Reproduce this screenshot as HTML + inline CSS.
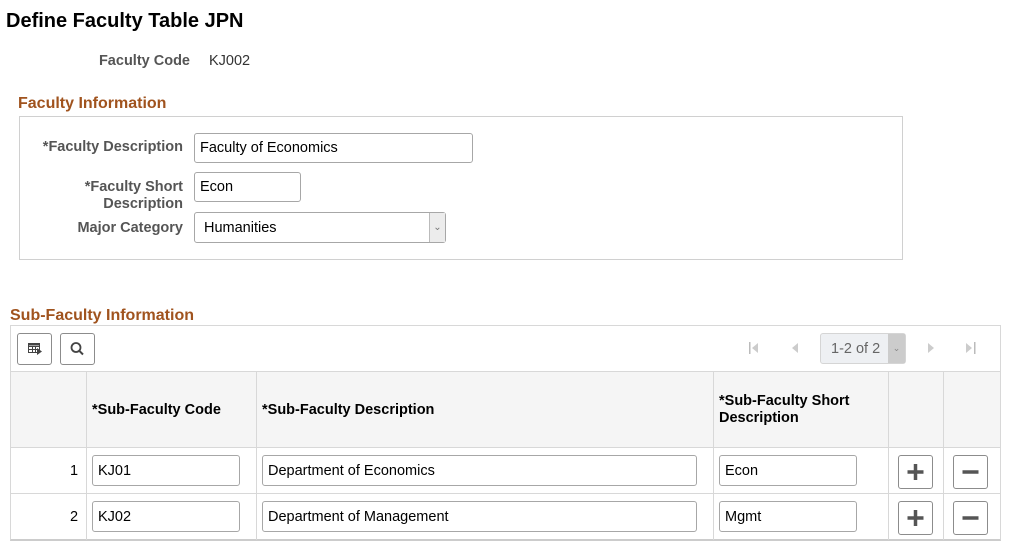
<!DOCTYPE html>
<html><head><meta charset="utf-8"><style>
*{box-sizing:border-box}
body{margin:0;width:1010px;height:553px;background:#fff;font-family:"Liberation Sans",Arial,sans-serif;position:relative;overflow:hidden;color:#000}
.a{position:absolute}
.lbl{position:absolute;font-size:14.5px;font-weight:bold;color:#555;text-align:right}
.inp{position:absolute;border:1px solid #a7a7a7;border-radius:3px;background:#fff;font-size:14.5px;color:#000;padding-left:5px;display:flex;align-items:center}
.sec{position:absolute;font-size:16px;font-weight:bold;color:#a0531e}
.vl{position:absolute;width:1px;background:#d8d8d8}
.hl{position:absolute;height:1px;background:#d8d8d8}
.th{position:absolute;font-size:14.5px;font-weight:bold;color:#000;line-height:17px}
.btn{position:absolute;width:35px;height:34px;border:1px solid #8c8c8c;border-radius:3px;background:#fff}
</style></head><body>
<div class="a" style="left:6px;top:10px;font-size:20px;font-weight:bold">Define Faculty Table JPN</div>
<div class="lbl" style="left:50px;width:140px;top:53px">Faculty Code</div>
<div class="a" style="left:209px;top:53px;font-size:14.5px;color:#333">KJ002</div>

<div class="sec" style="left:18px;top:95px">Faculty Information</div>
<div class="a" style="left:19px;top:116px;width:884px;height:144px;border:1px solid #d0d0d0"></div>
<div class="lbl" style="left:20px;width:163px;top:139px">*Faculty Description</div>
<div class="inp" style="left:194px;top:133px;width:279px;height:30px">Faculty of Economics</div>
<div class="lbl" style="left:20px;width:163px;top:179px;line-height:17px">*Faculty Short<br>Description</div>
<div class="inp" style="left:194px;top:172px;width:107px;height:30px">Econ</div>
<div class="lbl" style="left:20px;width:163px;top:220px">Major Category</div>
<div class="inp" style="left:194px;top:212px;width:252px;height:31px;padding-left:9px">Humanities
<div class="a" style="right:0;top:0;width:16px;height:29px;border-left:1px solid #bbb;background:#ececec;color:#777;font-size:10px;text-align:center;line-height:29px">&#8964;</div></div>

<div class="sec" style="left:10px;top:307px">Sub-Faculty Information</div>
<div class="a" style="left:10px;top:325px;width:991px;height:216px;border:1px solid #d8d8d8;border-bottom:2px solid #ccc"></div>
<div class="btn" style="left:17px;top:333px;width:35px;height:32px">
<svg width="33" height="30" viewBox="0 0 33 30"><g fill="none" stroke="#444" stroke-width="1"><rect x="10.5" y="9.5" width="11" height="9"/><line x1="10" y1="12.5" x2="22" y2="12.5"/><line x1="10" y1="15.5" x2="19" y2="15.5"/><line x1="14.5" y1="12" x2="14.5" y2="19"/><line x1="17.5" y1="12" x2="17.5" y2="19"/></g><rect x="10.5" y="9.5" width="11" height="2" fill="#444"/><path d="M19 14 L24 17.5 L19 21 Z" fill="#444"/></svg></div>
<div class="btn" style="left:60px;top:333px;width:35px;height:32px">
<svg width="33" height="30" viewBox="0 0 33 30"><circle cx="15" cy="13.5" r="4.5" fill="none" stroke="#444" stroke-width="1.8"/><line x1="18.3" y1="16.8" x2="22" y2="20.5" stroke="#444" stroke-width="2"/></svg></div>
<svg class="a" style="left:745px;top:340px" width="20" height="16"><rect x="4" y="2" width="1.5" height="12" fill="#bbb"/><path d="M13 3 L7 8 L13 13Z" fill="#ccc"/></svg>
<svg class="a" style="left:787px;top:340px" width="16" height="16"><path d="M11 3 L5 8 L11 13Z" fill="#ccc"/></svg>
<div class="a" style="left:820px;top:333px;width:86px;height:31px;border:1px solid #d5d5d5;border-radius:3px;background:#eef0f3;font-size:14.5px;color:#666;padding:7px 0 0 10px">1-2 of 2
<div class="a" style="right:0;top:0;width:17px;height:29px;background:#ccc;color:#888;font-size:9px;text-align:center;line-height:29px">&#8964;</div></div>
<svg class="a" style="left:923px;top:340px" width="16" height="16"><path d="M5 3 L11 8 L5 13Z" fill="#ccc"/></svg>
<svg class="a" style="left:962px;top:340px" width="20" height="16"><path d="M4 3 L10 8 L4 13Z" fill="#ccc"/><rect x="12" y="2" width="1.5" height="12" fill="#bbb"/></svg>

<div class="a" style="left:11px;top:371px;width:989px;height:76px;background:#f5f5f5"></div>
<div class="hl" style="left:11px;width:989px;top:371px"></div>
<div class="hl" style="left:11px;width:989px;top:447px"></div>
<div class="hl" style="left:11px;width:989px;top:493px"></div>
<div class="vl" style="left:86px;top:371px;height:169px"></div>
<div class="vl" style="left:256px;top:371px;height:169px"></div>
<div class="vl" style="left:713px;top:371px;height:169px"></div>
<div class="vl" style="left:888px;top:371px;height:169px"></div>
<div class="vl" style="left:943px;top:371px;height:169px"></div>
<div class="th" style="left:92px;top:402px">*Sub-Faculty Code</div>
<div class="th" style="left:262px;top:402px">*Sub-Faculty Description</div>
<div class="th" style="left:719px;top:393px">*Sub-Faculty Short<br>Description</div>

<div class="a" style="left:70px;top:463px;font-size:14.5px">1</div>
<div class="inp" style="left:92px;top:455px;width:148px;height:31px">KJ01</div>
<div class="inp" style="left:262px;top:455px;width:435px;height:31px">Department of Economics</div>
<div class="inp" style="left:719px;top:455px;width:138px;height:31px">Econ</div>
<div class="btn" style="left:898px;top:455px"><svg width="33" height="32"><path d="M16.5 8v16M8.5 16h16" stroke="#555" stroke-width="3.5"/></svg></div>
<div class="btn" style="left:953px;top:455px"><svg width="33" height="32"><path d="M8.5 16h16" stroke="#555" stroke-width="3.5"/></svg></div>

<div class="a" style="left:70px;top:509px;font-size:14.5px">2</div>
<div class="inp" style="left:92px;top:501px;width:148px;height:31px">KJ02</div>
<div class="inp" style="left:262px;top:501px;width:435px;height:31px">Department of Management</div>
<div class="inp" style="left:719px;top:501px;width:138px;height:31px">Mgmt</div>
<div class="btn" style="left:898px;top:501px"><svg width="33" height="32"><path d="M16.5 8v16M8.5 16h16" stroke="#555" stroke-width="3.5"/></svg></div>
<div class="btn" style="left:953px;top:501px"><svg width="33" height="32"><path d="M8.5 16h16" stroke="#555" stroke-width="3.5"/></svg></div>
</body></html>
